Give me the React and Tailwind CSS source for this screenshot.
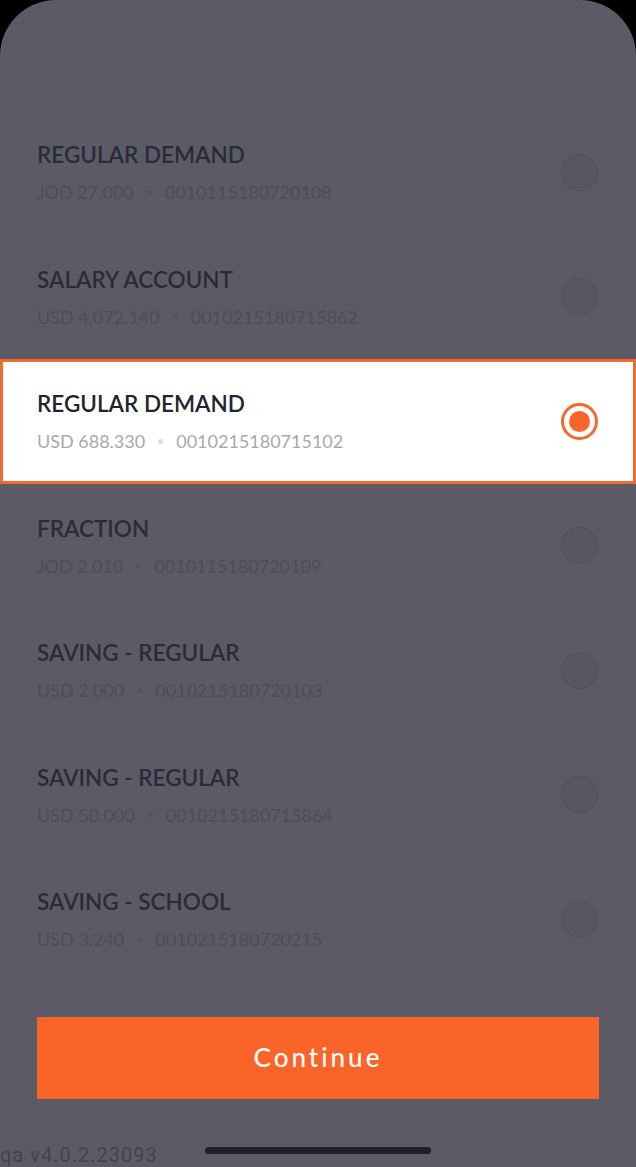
import React, { useState } from 'react';

const accounts = [
  { name: 'REGULAR DEMAND', amount: 'JOD 27.000', number: '0010115180720108' },
  { name: 'SALARY ACCOUNT', amount: 'USD 4,072.140', number: '0010215180715862' },
  { name: 'REGULAR DEMAND', amount: 'USD 688.330', number: '0010215180715102' },
  { name: 'FRACTION', amount: 'JOD 2.010', number: '0010115180720109' },
  { name: 'SAVING - REGULAR', amount: 'USD 2.000', number: '0010215180720103' },
  { name: 'SAVING - REGULAR', amount: 'USD 50.000', number: '0010215180715864' },
  { name: 'SAVING - SCHOOL', amount: 'USD 3.240', number: '0010215180720215' },
];

const AccountRow = ({ account, selected, onSelect }) => {
  if (selected) {
    return (
      <button
        onClick={onSelect}
        className="relative z-10 flex h-[124.5px] w-full items-center justify-between border-[3px] border-[#f26a2e] bg-white pl-[34px] pr-[35px] text-left"
      >
        <div className="flex flex-col">
          <span className="text-[22.5px] font-semibold leading-[28px] text-[#22232e]">{account.name}</span>
          <span className="mt-[12px] flex items-center text-[18px] leading-[22px] text-[#a8a8b0]">
            {account.amount}
            <span className="mx-[13px] h-[5px] w-[5px] rounded-full bg-[#dcdce0]" />
            {account.number}
          </span>
        </div>
        <span className="flex h-[37px] w-[37px] items-center justify-center rounded-full border-[3px] border-[#f26a2e]">
          <span className="h-[21px] w-[21px] rounded-full bg-[#f8652a]" />
        </span>
      </button>
    );
  }

  return (
    <button onClick={onSelect} className="flex h-[124.5px] w-full items-center justify-between pl-[37px] pr-[38px] text-left">
      <div className="flex flex-col">
        <span className="text-[22.5px] font-semibold leading-[28px] text-[#2b2b37]">{account.name}</span>
        <span className="mt-[12px] flex items-center text-[18px] leading-[22px] text-[#4d4d59]">
          {account.amount}
          <span className="mx-[13px] h-[5px] w-[5px] rounded-full bg-[#55555f]" />
          {account.number}
        </span>
      </div>
      <span className="h-[37px] w-[37px] rounded-full border border-[#51515c] bg-[#575763]" />
    </button>
  );
};

export default function App() {
  const [selected, setSelected] = useState(2);

  return (
    <div className="h-[1167px] w-[636px] overflow-hidden bg-black" style={{ fontFamily: 'Lato, "Open Sans", sans-serif' }}>
      <div className="relative flex h-full flex-col rounded-t-[56px] bg-[#5b5b67]">
        <div className="pt-[110px]">
          {accounts.map((a, i) => (
            <AccountRow key={i} account={a} selected={selected === i} onSelect={() => setSelected(i)} />
          ))}
        </div>

        <div className="mt-[35px] px-[37px]">
          <button className="flex h-[82px] w-full items-center justify-center bg-[#fb6428] text-[26px] font-medium tracking-[3px] text-white">
            Continue
          </button>
        </div>

        {/* footer: build tag + home indicator */}
        <div className="relative mt-auto h-[60px]">
          <span
            className="absolute bottom-0 left-0 text-[20px] leading-[24px] tracking-[1px] text-[#43434d]"
            style={{ fontFamily: 'Roboto, sans-serif' }}
          >
            qa v4.0.2.23093
          </span>
          <div className="absolute bottom-[13px] left-[205px] h-[7px] w-[226px] rounded-full bg-[#20202a]" />
        </div>
      </div>
    </div>
  );
}
